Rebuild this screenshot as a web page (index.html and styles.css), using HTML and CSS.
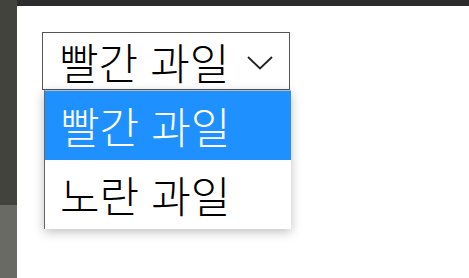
FILE: index.html
```html
<!DOCTYPE html>
<html lang="ko">
<head>
    <meta charset="UTF-8">
    <title>과일 선택</title>
    <link rel="stylesheet" href="styles.css">
</head>
<body>
    <div class="page">
        <aside class="side">
            <div class="side-top"></div>
            <div class="side-bottom"></div>
        </aside>
        <div class="main">
            <div class="topbar"></div>
            <div class="content">
                <div class="picker">
                    <div class="select">
                        <span>빨간 과일</span>
                        <svg class="chevron" width="26" height="14" viewBox="0 0 26 14">
                            <path d="M1 1 L13 12.5 L25 1" fill="none" stroke="#222" stroke-width="1.8"/>
                        </svg>
                    </div>
                    <div class="options">
                        <div class="option active">빨간 과일</div>
                        <div class="option">노란 과일</div>
                    </div>
                </div>
            </div>
        </div>
    </div>
</body>
</html>
```

FILE: styles.css
```css
body {
    margin: 0;
    font-family: "Noto Sans CJK KR", "Noto Sans", sans-serif;
    font-weight: 300;
    background: #fff;
}

.page {
    display: flex;
    height: 278px;
}

.side {
    width: 17px;
    display: flex;
    flex-direction: column;
}

.side-top {
    height: 205px;
    background: #42443b;
}

.side-bottom {
    flex: 1;
    background: #686a63;
}

.main {
    flex: 1;
    display: flex;
    flex-direction: column;
}

.topbar {
    height: 6px;
    background: #2c2c2c;
}

.content {
    padding: 26px 0 0 25px;
}

.picker {
    position: relative;
    width: 248px;
}

.select {
    box-sizing: border-box;
    height: 58px;
    border: 1px solid #555;
    display: flex;
    align-items: center;
    justify-content: space-between;
    padding: 0 16px 0 16px;
    font-size: 43px;
    line-height: 1;
    color: #000;
}

.chevron {
    margin-top: 4px;
}

.options {
    position: absolute;
    left: 2px;
    top: 58px;
    width: 246px;
    border-left: 1px solid #666;
    border-top: 1px solid #bbb;
    background: #fff;
    box-shadow: 0 3px 10px rgba(0, 0, 0, 0.25);
}

.option {
    height: 69px;
    display: flex;
    align-items: center;
    padding-left: 15px;
    font-size: 43px;
    line-height: 1;
    color: #000;
}

.option.active {
    background: #1e90ff;
    color: #fff;
}
```
